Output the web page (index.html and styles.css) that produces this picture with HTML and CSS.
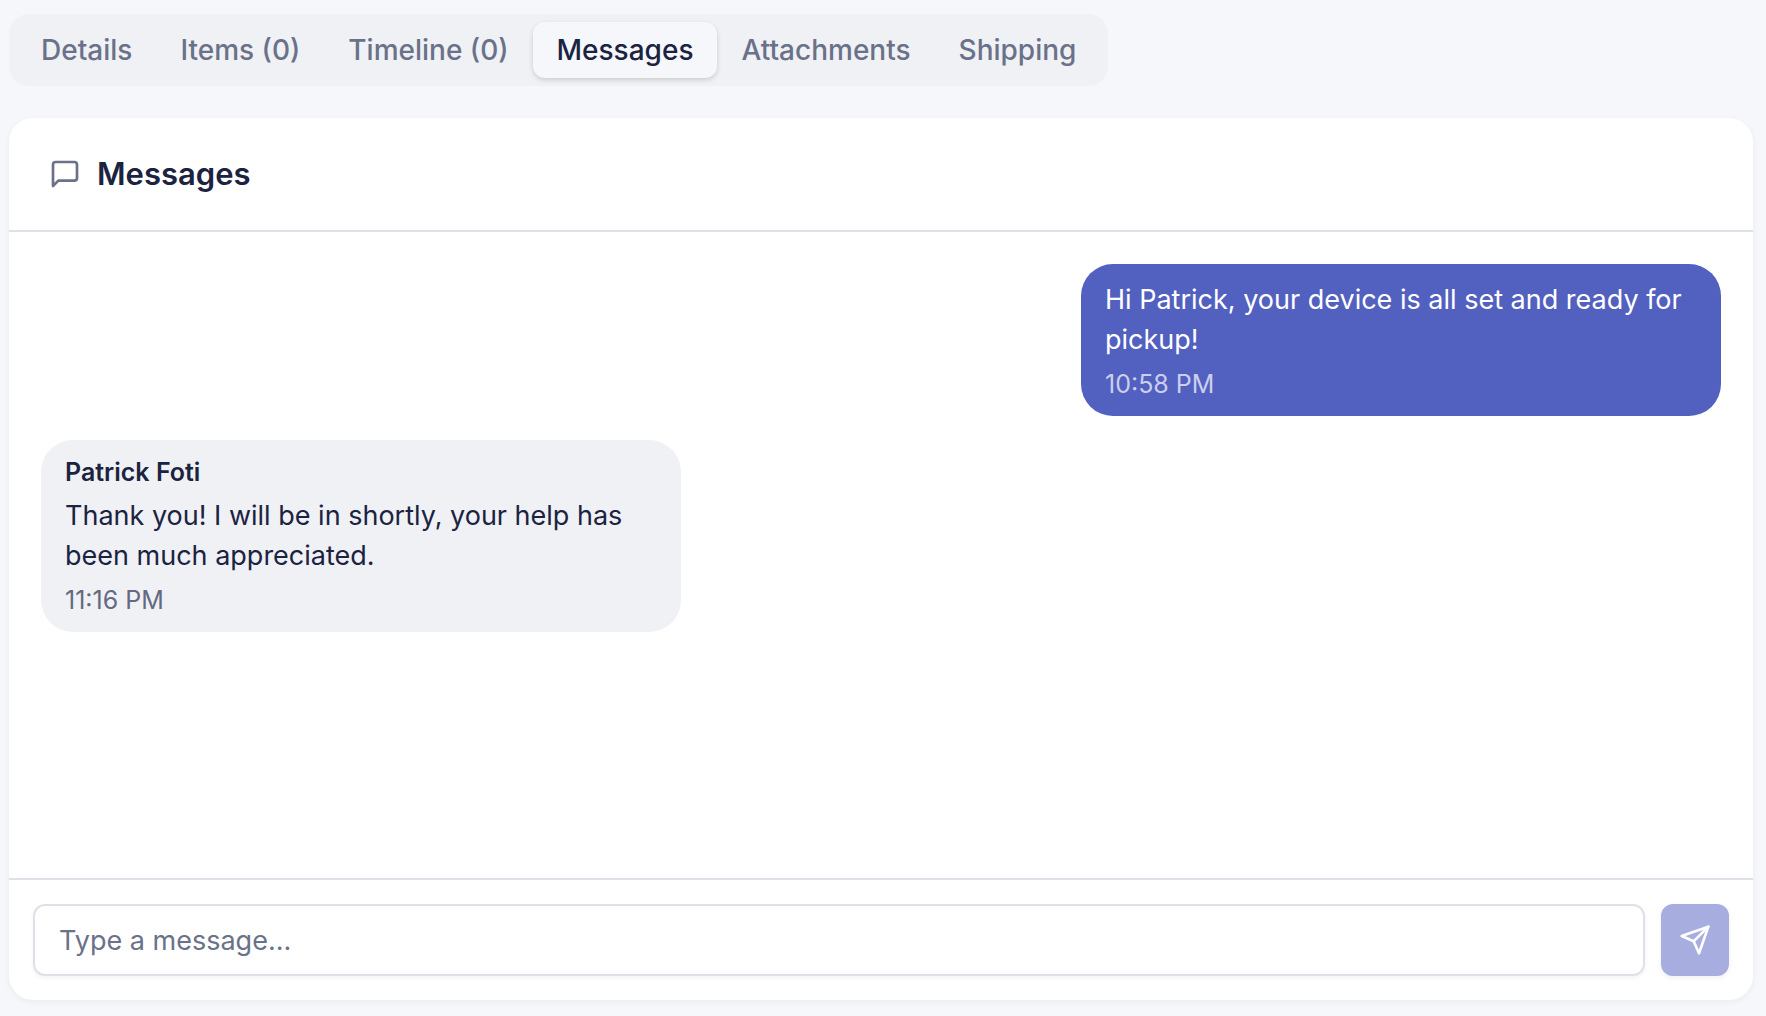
FILE: index.html
```html
<!DOCTYPE html>
<html lang="en">

<head>
    <meta charset="UTF-8">
    <meta name="viewport" content="width=device-width, initial-scale=1.0">
    <title>Messages</title>
    <link rel="stylesheet" href="styles.css">
</head>

<body>
    <div class="page">
        <!-- Tabs -->
        <div class="tabs" role="tablist">
            <button type="button" class="tab" role="tab">Details</button>
            <button type="button" class="tab" role="tab">Items (0)</button>
            <button type="button" class="tab" role="tab">Timeline (0)</button>
            <button type="button" class="tab active" role="tab" aria-selected="true">Messages</button>
            <button type="button" class="tab" role="tab">Attachments</button>
            <button type="button" class="tab" role="tab">Shipping</button>
        </div>

        <!-- Messages card -->
        <main class="card">
            <header class="card-header">
                <svg class="icon" viewBox="0 0 24 24" aria-hidden="true">
                    <path d="M21 15a2 2 0 0 1-2 2H7l-4 4V5a2 2 0 0 1 2-2h14a2 2 0 0 1 2 2z" />
                </svg>
                <h2>Messages</h2>
            </header>

            <div class="messages">
                <div class="message sent">
                    <p class="text">Hi Patrick, your device is all set and ready for pickup!</p>
                    <p class="time">10:58 PM</p>
                </div>
                <div class="message received">
                    <p class="name">Patrick Foti</p>
                    <p class="text">Thank you! I will be in shortly, your help has been much appreciated.</p>
                    <p class="time">11:16 PM</p>
                </div>
            </div>

            <form class="composer">
                <input type="text" id="message" aria-label="Message" placeholder="Type a message...">
                <button type="submit" class="send" aria-label="Send" disabled>
                    <svg class="icon" viewBox="0 0 24 24" aria-hidden="true">
                        <path d="m22 2-7 20-4-9-9-4Z" />
                        <path d="M22 2 11 13" />
                    </svg>
                </button>
            </form>
        </main>
    </div>
</body>

</html>
```
FILE: styles.css
```css
* {
    box-sizing: border-box;
}

body {
    margin: 0;
    background-color: #f5f7fb;
    color: #1b2341;
    font-family: Inter, "Liberation Sans", sans-serif;
    font-size: 27px;
    line-height: 40px;
}

h2,
p {
    margin: 0;
}

button,
input {
    font: inherit;
}

.page {
    display: flex;
    flex-direction: column;
    align-items: flex-start;
    gap: 32px;
    min-height: 100vh;
    padding: 14px 13px 16px 9px;
}

.icon {
    width: 32px;
    height: 32px;
    flex-shrink: 0;
    fill: none;
    stroke: currentColor;
    stroke-width: 2;
    stroke-linecap: round;
    stroke-linejoin: round;
}

/* Tabs */
.tabs {
    display: flex;
    padding: 8px;
    border-radius: 20px;
    background-color: #eff1f5;
}

.tab {
    padding: 8px 24px;
    border: none;
    border-radius: 12px;
    background: none;
    color: #6a7189;
    font-size: 28px;
    font-weight: 500;
    white-space: nowrap;
    cursor: pointer;
}

.tab.active {
    background-color: #f5f7fb;
    color: #1b2341;
    box-shadow: 0 2px 6px rgba(0, 0, 0, 0.08), 0 2px 4px rgba(0, 0, 0, 0.08);
}

/* Card */
.card {
    display: flex;
    flex: 1;
    flex-direction: column;
    align-self: stretch;
    border-radius: 24px;
    background-color: #fff;
    box-shadow: 0 2px 6px rgba(27, 35, 65, 0.05);
}

.card-header {
    display: flex;
    align-items: center;
    gap: 16px;
    padding: 40px;
    border-bottom: 2px solid #dfe1e9;
}

.card-header .icon {
    color: #6a7189;
}

.card-header h2 {
    font-size: 31px;
    font-weight: 600;
    line-height: 32px;
}

.messages {
    display: flex;
    flex: 1;
    flex-direction: column;
    gap: 24px;
    padding: 32px;
}

.message {
    width: 640px;
    max-width: 80%;
    padding: 16px 24px;
    border-radius: 32px;
}

.message.sent {
    align-self: flex-end;
    background-color: #5260c0;
    color: #fff;
}

.message.received {
    background-color: #eff1f5;
}

.name,
.time {
    font-size: 25px;
    line-height: 32px;
}

.name {
    margin-bottom: 8px;
    font-weight: 600;
}

.time {
    margin-top: 8px;
    color: #646a80;
}

.sent .time {
    color: #cbcfec;
}

/* Composer */
.composer {
    display: flex;
    gap: 16px;
    padding: 24px;
    border-top: 2px solid #dfe1e9;
}

.composer input {
    flex: 1;
    min-width: 0;
    height: 72px;
    padding: 8px 24px;
    border: 2px solid #dfe1e9;
    border-radius: 12px;
    background-color: #fff;
    color: #1b2341;
    box-shadow: 0 2px 4px rgba(0, 0, 0, 0.05);
}

.composer input::placeholder {
    color: #6a7189;
    opacity: 1;
}

.send {
    display: flex;
    align-items: center;
    justify-content: center;
    width: 68px;
    height: 72px;
    padding: 0;
    border: none;
    border-radius: 12px;
    background-color: #5260c0;
    color: #fff;
    box-shadow: 0 2px 4px rgba(0, 0, 0, 0.1);
}

.send:disabled {
    opacity: 0.5;
}
```
